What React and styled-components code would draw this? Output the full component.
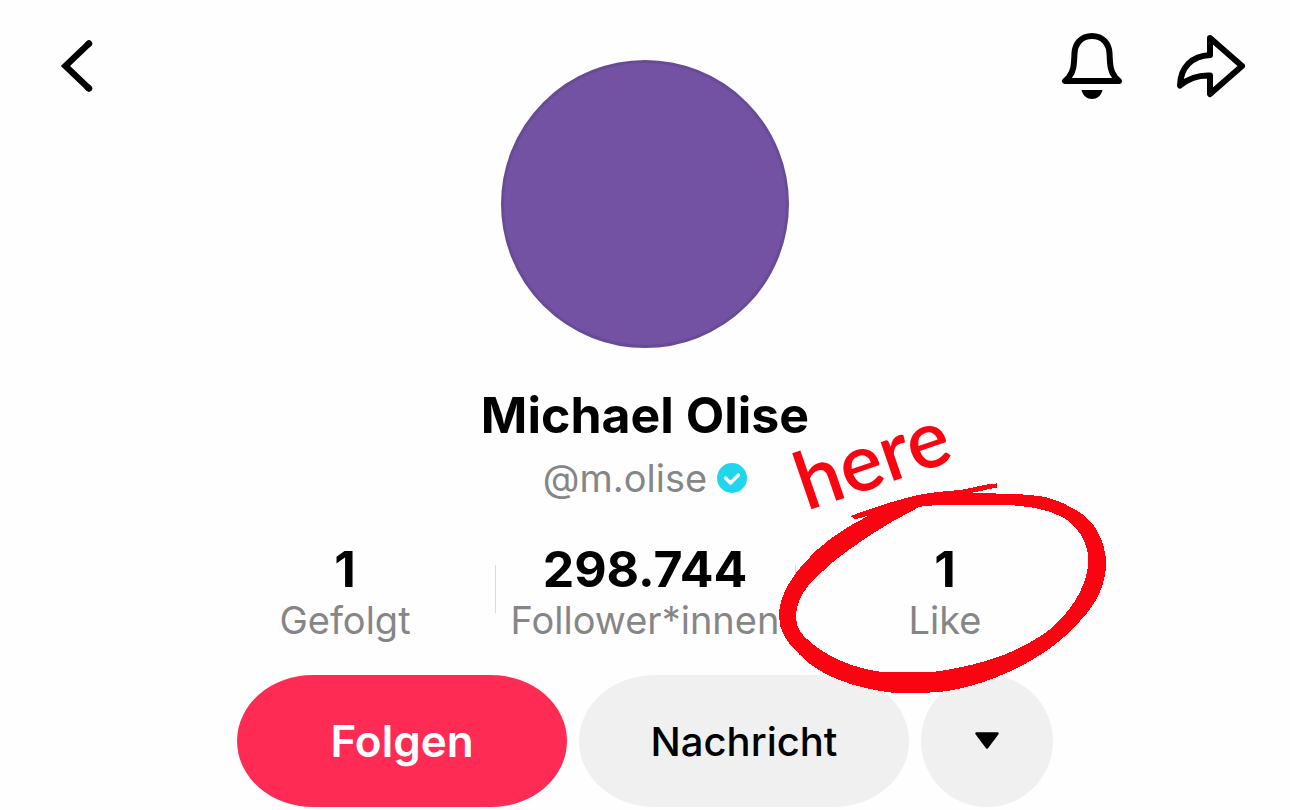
import React from "react";
import styled, { createGlobalStyle } from "styled-components";

const GlobalStyle = createGlobalStyle`
  * {
    box-sizing: border-box;
  }
  body {
    margin: 0;
    background: #fefefe;
    color: #000;
    font-family: Inter, "Noto Sans", sans-serif;
  }
  button {
    border: 0;
    padding: 0;
    background: none;
    color: inherit;
    font: inherit;
    cursor: pointer;
  }
`;

const Page = styled.main`
  display: flex;
  flex-direction: column;
  align-items: center;
`;

const TopBar = styled.header`
  width: 100%;
  display: grid;
  grid-template-columns: 1fr auto 1fr;
  align-items: start;
  padding: 28px 44px 0 52px;
`;

const Actions = styled.div`
  display: flex;
  justify-content: flex-end;
  gap: 50px;
`;

const IconButton = styled.button`
  width: ${props => props.$width}px;
  height: 76px;
  svg {
    display: block;
  }
`;

const Avatar = styled.div`
  width: 288px;
  height: 288px;
  margin: 32px 0 0 -8px;
  border: 3px solid #684b96;
  border-radius: 50%;
  background: #7352a4;
`;

const Name = styled.h1`
  margin: 37px 0 0;
  font-size: 50px;
  line-height: 60px;
  font-weight: 700;
`;

const Handle = styled.div`
  display: flex;
  align-items: center;
  gap: 10px;
  margin-top: 8px;
  color: #868686;
  font-size: 38px;
  line-height: 50px;
  svg {
    display: block;
  }
`;

const Stats = styled.div`
  display: grid;
  grid-template-columns: repeat(3, 300px);
  margin-top: 36px;
`;

const StatItem = styled.div`
  position: relative;
  display: flex;
  flex-direction: column;
  align-items: center;
  & + &::before {
    content: "";
    position: absolute;
    left: 0;
    top: 26px;
    width: 1px;
    height: 48px;
    background: #dcdcdc;
  }
`;

const Count = styled.strong`
  font-size: 50px;
  line-height: 60px;
  font-weight: 700;
`;

const Label = styled.span`
  color: #868686;
  font-size: 38px;
  line-height: 43px;
`;

const Buttons = styled.div`
  display: flex;
  gap: 12px;
  margin-top: 33px;
`;

const PillButton = styled.button`
  && {
    width: ${props => (props.$round ? 132 : 330)}px;
    height: 132px;
    border-radius: ${props => (props.$round ? "66px" : "76px / 66px")};
    background: ${props => (props.$primary ? "#fe2c55" : "#f0f0f0")};
    color: ${props => (props.$primary ? "#fff" : "#000")};
    font-size: ${props => (props.$primary ? 44 : 40)}px;
    font-weight: ${props => (props.$primary ? 600 : 500)};
  }
  svg {
    display: block;
    margin: 0 auto;
  }
`;

const Marker = styled.div`
  position: absolute;
  z-index: 1;
  left: -35px;
  top: -59px;
  pointer-events: none;
  svg {
    display: block;
  }
`;

const Scribble = styled.span`
  position: absolute;
  left: 32px;
  top: -66px;
  color: #fb0412;
  font-family: Lato, sans-serif;
  font-size: 80px;
  line-height: 84px;
  font-weight: 600;
  transform: rotate(-19deg);
`;

const BackIcon = () => (
  <svg width="48" height="76" viewBox="0 0 48 76" aria-hidden="true">
    <path d="M37.500 15 13.500 38 37.500 61" fill="none" stroke="#000" strokeWidth="6.500" strokeLinejoin="miter" />
    <path d="M37 15.500 36 16.500M37 60.500 36 59.500" stroke="#000" strokeWidth="6.500" strokeLinecap="round" />
  </svg>
);

const BellIcon = () => (
  <svg width="64" height="76" viewBox="0 0 64 76" aria-hidden="true">
    <path
      d="M32 8C21 8 15 16 14.500 25C14 36 14 43 9 49L5 53H59L55 49C50 43 50 36 49.500 25C49 16 43 8 32 8Z"
      fill="none"
      stroke="#000"
      strokeWidth="6"
      strokeLinejoin="round"
    />
    <path d="M21.500 62H42.500C41 68 37 71 32 71S23 68 21.500 62Z" />
  </svg>
);

const ShareIcon = () => (
  <svg width="72" height="76" viewBox="0 0 72 76" aria-hidden="true">
    <path
      d="M36 10 68 38 36 66V47.500C24 47 15 50 6 57.500C6.500 39 18 28 36 27Z"
      fill="none"
      stroke="#000"
      strokeWidth="6"
      strokeLinejoin="round"
    />
  </svg>
);

const VerifiedIcon = () => (
  <svg width="30" height="30" viewBox="0 0 30 30" role="img" aria-label="Verifiziert">
    <circle cx="15" cy="15" r="15" fill="#20d5ec" />
    <path d="M8.500 15 13.500 20 21.500 12" fill="none" stroke="#fff" strokeWidth="3.400" strokeLinecap="round" strokeLinejoin="round" />
  </svg>
);

const CaretIcon = () => (
  <svg width="26" height="18" viewBox="0 0 26 18" aria-hidden="true">
    <path d="M2.500 1.500H23.500L13 15.500Z" stroke="#000" strokeWidth="2.500" strokeLinejoin="round" />
  </svg>
);

const RedCircle = () => (
  <svg width="360" height="230" viewBox="0 0 1080 690" aria-hidden="true">
    <path
      d="M272 108C330 86 400 63 460 48C510 37 560 33 600 30C640 24 670 12 712 10V22L628 40C700 40 800 40 860 52C925 70 985 105 1010 150C1030 185 1038 220 1038 250C1038 310 1010 365 980 400C945 445 890 495 840 525C740 590 600 638 500 638H395C290 625 180 590 120 525C80 490 57 450 57 410C57 350 90 300 125 258C175 195 250 145 328 106L285 118Z
        M480 80C370 135 290 190 220 245C190 272 165 295 150 310C118 350 108 380 108 410C108 445 125 465 150 485C200 530 280 565 365 576H520C600 565 670 548 730 525C800 497 850 465 880 440C950 375 985 300 985 240C985 185 950 135 905 110C850 82 780 74 690 74H540Z"
      fill="#fb0412"
      fillRule="evenodd"
      shapeRendering="crispEdges"
    />
  </svg>
);

const Stat = ({ count, label, children }) => (
  <StatItem>
    <Count>{count}</Count>
    <Label>{label}</Label>
    {children}
  </StatItem>
);

const App = () => {
  return (
    <Page>
      <GlobalStyle />
      <TopBar>
        <IconButton type="button" $width={48} aria-label="Zurück">
          <BackIcon />
        </IconButton>
        <Avatar />
        <Actions>
          <IconButton type="button" $width={64} aria-label="Benachrichtigungen">
            <BellIcon />
          </IconButton>
          <IconButton type="button" $width={72} aria-label="Teilen">
            <ShareIcon />
          </IconButton>
        </Actions>
      </TopBar>
      <Name>Michael Olise</Name>
      <Handle>
        @m.olise
        <VerifiedIcon />
      </Handle>
      <Stats>
        <Stat count="1" label="Gefolgt" />
        <Stat count="298.744" label="Follower*innen" />
        <Stat count="1" label="Like">
          <Marker>
            <RedCircle />
            <Scribble>here</Scribble>
          </Marker>
        </Stat>
      </Stats>
      <Buttons>
        <PillButton type="button" $primary>Folgen</PillButton>
        <PillButton type="button">Nachricht</PillButton>
        <PillButton type="button" $round aria-label="Mehr anzeigen">
          <CaretIcon />
        </PillButton>
      </Buttons>
    </Page>
  );
};

export default App;
